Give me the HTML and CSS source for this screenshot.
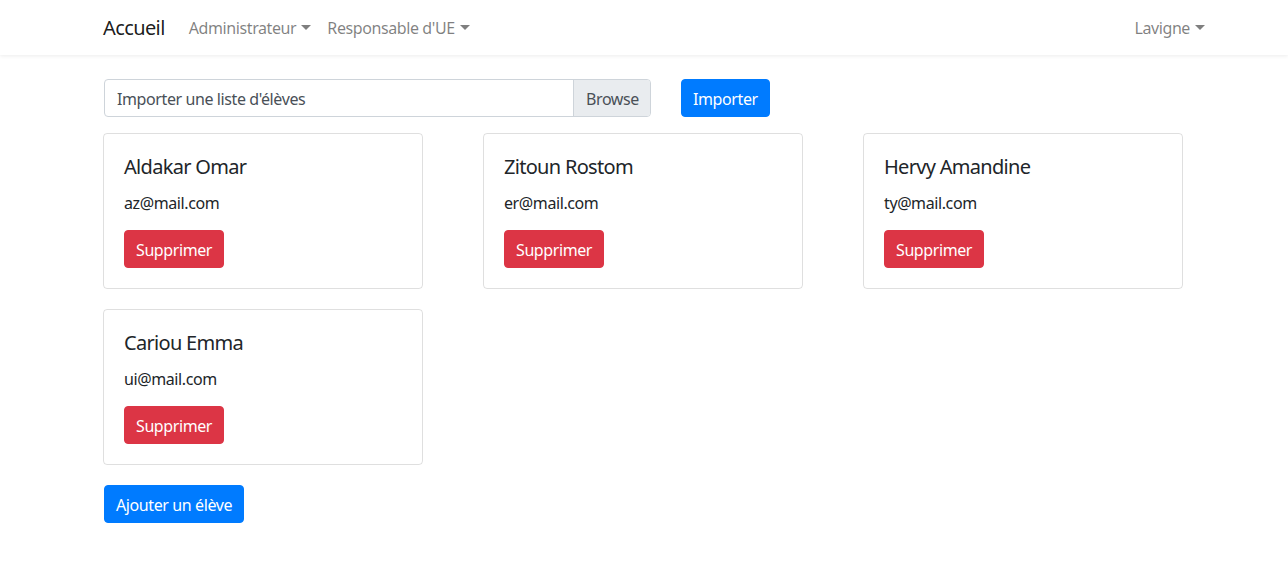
FILE: index.html
```html
<!DOCTYPE html>
<html lang="fr">
<head>
<meta charset="utf-8">
<title>Élèves</title>
<link rel="stylesheet" href="styles.css">
</head>
<body>
<nav class="navbar">
  <div class="nav-inner">
    <a class="brand">Accueil</a>
    <ul class="nav-list">
      <li class="nav-link">Administrateur<span class="caret"></span></li>
      <li class="nav-link">Responsable d'UE<span class="caret"></span></li>
    </ul>
    <ul class="nav-list nav-right">
      <li class="nav-link">Lavigne<span class="caret"></span></li>
    </ul>
  </div>
</nav>
<main class="container">
  <div class="import-row">
    <div class="file-input">
      <span class="file-label">Importer une liste d'élèves</span>
      <span class="file-browse">Browse</span>
    </div>
    <button class="btn btn-primary">Importer</button>
  </div>
  <div class="cards">
    <div class="card">
      <h5 class="card-title">Aldakar Omar</h5>
      <p class="card-text">az@mail.com</p>
      <button class="btn btn-danger">Supprimer</button>
    </div>
    <div class="card">
      <h5 class="card-title">Zitoun Rostom</h5>
      <p class="card-text">er@mail.com</p>
      <button class="btn btn-danger">Supprimer</button>
    </div>
    <div class="card">
      <h5 class="card-title">Hervy Amandine</h5>
      <p class="card-text">ty@mail.com</p>
      <button class="btn btn-danger">Supprimer</button>
    </div>
    <div class="card">
      <h5 class="card-title">Cariou Emma</h5>
      <p class="card-text">ui@mail.com</p>
      <button class="btn btn-danger">Supprimer</button>
    </div>
  </div>
  <button class="btn btn-primary">Ajouter un élève</button>
</main>
</body>
</html>
```
FILE: styles.css
```css
* { box-sizing: border-box; }
body {
  margin: 0;
  font-family: "Segoe UI", "Noto Sans", "Open Sans", sans-serif;
  font-size: 16px;
  letter-spacing: -0.4px;
  line-height: 1.5;
  color: #212529;
  background: #fff;
}
.navbar {
  height: 55px;
  background: #fff;
  box-shadow: 0 1px 4px rgba(0,0,0,0.08);
  display: flex;
  align-items: center;
}
.nav-inner {
  display: flex;
  align-items: center;
  width: 100%;
  padding: 1px 75px 0 103px;
}
.brand {
  font-size: 20px;
  letter-spacing: -0.6px;
  color: rgba(0,0,0,0.9);
  margin-right: 16px;
  line-height: 30px;
}
.nav-list {
  list-style: none;
  margin: 0;
  padding: 0;
  display: flex;
}
.nav-right { margin-left: auto; }
.nav-link {
  color: rgba(0,0,0,0.5);
  padding: 8px;
  display: flex;
  align-items: center;
}
.caret {
  display: inline-block;
  margin-left: 5px;
  border-top: 5px solid;
  border-left: 5px solid transparent;
  border-right: 5px solid transparent;
  margin-top: -2px;
}
.container {
  padding: 24px 0 0 104px;
}
.import-row {
  display: flex;
  gap: 30px;
  margin-bottom: 16px;
}
.file-input {
  width: 547px;
  height: 38px;
  border: 1px solid #ced4da;
  border-radius: 4px;
  display: flex;
  align-items: stretch;
  color: #495057;
  overflow: hidden;
}
.file-label {
  flex: 1;
  padding: 7px 12px 5px;
  line-height: 24px;
}
.file-browse {
  background: #e9ecef;
  border-left: 1px solid #ced4da;
  padding: 7px 12px 5px;
  line-height: 24px;
  width: 77px;
  text-align: center;
}
.btn {
  font: inherit;
  letter-spacing: inherit;
  height: 38px;
  padding: 7px 11px 5px;
  line-height: 24px;
  border: 1px solid transparent;
  border-radius: 4px;
  color: #fff;
  cursor: pointer;
}
.btn-primary { background: #007bff; border-color: #007bff; }
.btn-danger { background: #dc3545; border-color: #dc3545; }
.cards {
  display: grid;
  grid-template-columns: repeat(3, 320px);
  column-gap: 60px;
  row-gap: 20px;
  margin-left: -1px;
  margin-bottom: 20px;
}
.card {
  border: 1px solid rgba(0,0,0,0.125);
  border-radius: 4px;
  padding: 21px 20px 19px;
  height: 156px;
}
.card-title {
  margin: 0 0 12px;
  font-size: 20px;
  font-weight: 400;
  letter-spacing: -0.7px;
  line-height: 24px;
}
.card-text {
  margin: 0 0 15px;
  line-height: 24px;
}
```
